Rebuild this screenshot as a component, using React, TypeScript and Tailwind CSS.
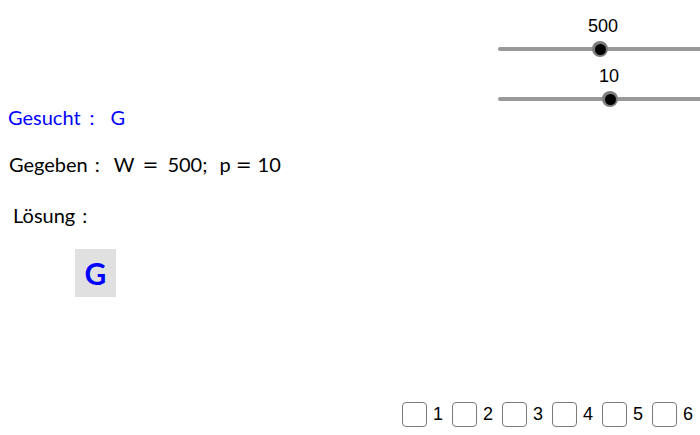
import React from 'react';

interface SliderProps {
  value: string;
  labelOffset: string;
  knobOffset: string;
}

function Slider({ value, labelOffset, knobOffset }: SliderProps) {
  return (
    <div className="flex flex-col h-[50px]">
      <div className={`text-[18px] leading-[18px] text-black font-['Liberation_Sans',Arial,sans-serif] ${labelOffset}`}>
        {value}
      </div>
      <div className="relative mt-[12px] h-[4px] rounded-l-full bg-[#999999]">
        <div
          className={`absolute top-1/2 -translate-y-1/2 w-[16px] h-[16px] rounded-full bg-[#7d7d7d] flex items-center justify-center ${knobOffset}`}
        >
          <div className="w-[11px] h-[11px] rounded-full bg-black" />
        </div>
      </div>
    </div>
  );
}

function Check({ label, last = false }: { label: string; last?: boolean }) {
  return (
    <div className={`flex items-center shrink-0 ${last ? '' : 'mr-[9px]'}`}>
      <div className="shrink-0 w-[25px] h-[25px] rounded-[4px] border border-[#7a7a7a] bg-white" />
      <span className="ml-[6px] text-[18px] leading-[25px] text-black font-['Liberation_Sans',Arial,sans-serif]">
        {label}
      </span>
    </div>
  );
}

const eq = "font-['DejaVu_Sans',sans-serif] text-[19px]";

export default function App() {
  return (
    <div className="relative w-[700px] h-[435px] bg-white overflow-hidden flex flex-col font-['Lato',sans-serif]">
      {/* sliders sit over the canvas, top right */}
      <div className="absolute right-0 top-[17px] w-[202px] flex flex-col">
        <Slider value="500" labelOffset="ml-[90px]" knobOffset="left-[94px]" />
        <Slider value="10" labelOffset="ml-[101px]" knobOffset="left-[104px]" />
      </div>

      <div className="flex flex-col pt-[105px] text-[20px] leading-[24px] text-black">
        <div className="pl-[8px] text-[#0000ff] flex">
          <span>Gesucht</span>
          <span className="ml-[9px]">:</span>
          <span className="ml-[16px]">G</span>
        </div>
        <div className="pl-[9px] mt-[23px] flex">
          <span>Gegeben</span>
          <span className="ml-[7px]">:</span>
          <span className="ml-[14px]">W</span>
          <span className={`ml-[8px] ${eq}`}>=</span>
          <span className="ml-[9px]">500;</span>
          <span className="ml-[12px]">p</span>
          <span className={`ml-[5px] ${eq}`}>=</span>
          <span className="ml-[6px]">10</span>
        </div>
        <div className="pl-[13px] mt-[27px] flex">
          <span>Lösung</span>
          <span className="ml-[7px]">:</span>
        </div>
        <div className="ml-[75px] mt-[22px] w-[41px] h-[48px] bg-[#e0e0e0] flex items-center justify-center">
          <span className="text-[30px] leading-none font-bold text-[#0000ff]">G</span>
        </div>
      </div>

      <div className="mt-auto flex justify-end pr-[7px] pb-[8px]">
        <Check label="1" />
        <Check label="2" />
        <Check label="3" />
        <Check label="4" />
        <Check label="5" />
        <Check label="6" last />
      </div>
    </div>
  );
}
